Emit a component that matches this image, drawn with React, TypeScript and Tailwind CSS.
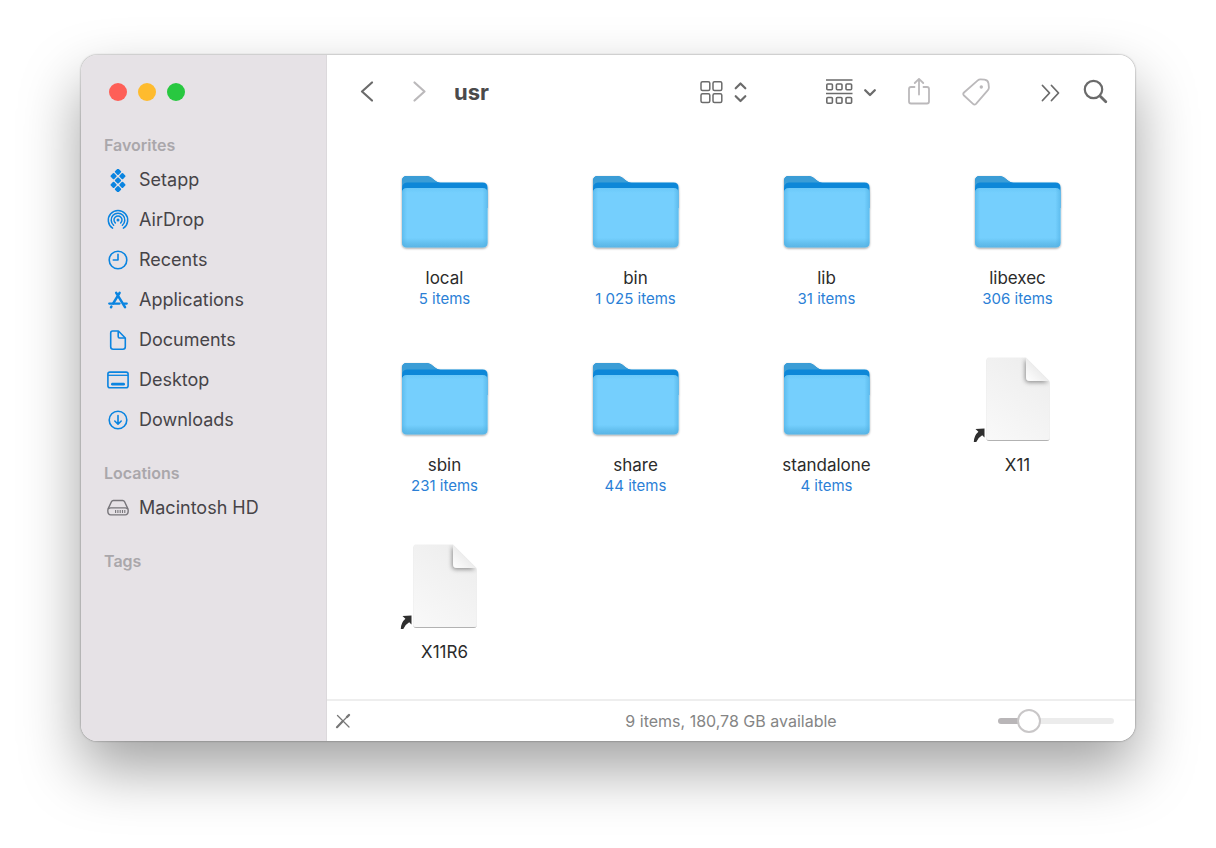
import { useState } from 'react'

const favorites = [
  { name: 'Setapp', icon: <SetappIcon /> },
  { name: 'AirDrop', icon: <AirDropIcon /> },
  { name: 'Recents', icon: <RecentsIcon /> },
  { name: 'Applications', icon: <ApplicationsIcon /> },
  { name: 'Documents', icon: <DocumentsIcon /> },
  { name: 'Desktop', icon: <DesktopIcon /> },
  { name: 'Downloads', icon: <DownloadsIcon /> },
]

const locations = [{ name: 'Macintosh HD', icon: <DiskIcon /> }]

const items = [
  { name: 'local', type: 'folder', info: '5 items' },
  { name: 'bin', type: 'folder', info: '1 025 items' },
  { name: 'lib', type: 'folder', info: '31 items' },
  { name: 'libexec', type: 'folder', info: '306 items' },
  { name: 'sbin', type: 'folder', info: '231 items' },
  { name: 'share', type: 'folder', info: '44 items' },
  { name: 'standalone', type: 'folder', info: '4 items' },
  { name: 'X11', type: 'alias', info: '' },
  { name: 'X11R6', type: 'alias', info: '' },
]

function SetappIcon() {
  const dots = [[11, 2.8], [6.6, 7.1], [15.4, 7.1], [11, 11.5], [6.6, 15.9], [15.4, 15.9], [11, 20.2]]
  return (
    <svg viewBox="0 0 22 23" className="w-[22px] h-[23px]" fill="#0a84e0">
      {dots.map(([x, y]) => (
        <rect key={`${x}-${y}`} x={x - 2.5} y={y - 2.5} width="5" height="5" rx="1" transform={`rotate(45 ${x} ${y})`} />
      ))}
    </svg>
  )
}

function AirDropIcon() {
  return (
    <svg viewBox="0 0 22 22" className="w-[22px] h-[22px]" fill="none" stroke="#0a84e0" strokeWidth="1.5" strokeLinecap="round">
      <path d="M5.6 19.2A9.7 9.7 0 1 1 16.4 19.2" />
      <path d="M6.6 16.2A6.8 6.8 0 1 1 15.4 16.2" />
      <path d="M8.3 13.9A4 4 0 1 1 13.7 13.9" />
      <circle cx="11" cy="11" r="1.5" fill="#0a84e0" stroke="none" />
    </svg>
  )
}

function RecentsIcon() {
  return (
    <svg viewBox="0 0 22 22" className="w-[22px] h-[22px]" fill="none" stroke="#0a84e0" strokeWidth="1.6" strokeLinecap="round" strokeLinejoin="round">
      <circle cx="11" cy="11" r="8.8" />
      <path d="M11 5.3V11H6.3" />
    </svg>
  )
}

function ApplicationsIcon() {
  return (
    <svg viewBox="0 0 22 22" className="w-[22px] h-[22px]" fill="none" stroke="#0a84e0" strokeWidth="2.5" strokeLinecap="round">
      <path d="M12.6 3.8L6.2 14.4M9.2 3.8L18 18.2M4.4 17.6L4 18.2" />
      <path d="M2.2 14.6H12.6M17 14.6H19.8" strokeWidth="2.2" />
    </svg>
  )
}

function DocumentsIcon() {
  return (
    <svg viewBox="0 0 22 22" className="w-[22px] h-[22px]" fill="none" stroke="#0a84e0" strokeWidth="1.6" strokeLinejoin="round">
      <path d="M5.7 2H11.4L18.3 9V17.8Q18.3 20.2 15.9 20.2H6.1Q3.7 20.2 3.7 17.8V4Q3.7 2 5.7 2Z" />
      <path d="M11.2 2.2V7.6Q11.2 9 12.6 9H18" />
    </svg>
  )
}

function DesktopIcon() {
  return (
    <svg viewBox="0 0 22 22" className="w-[22px] h-[22px]" fill="none" stroke="#0a84e0" strokeWidth="1.6">
      <rect x="0.9" y="3.1" width="20.2" height="15.6" rx="2" />
      <path d="M1 6.3H21" strokeWidth="1.3" />
      <path d="M5.4 15.2H16.6" strokeWidth="2.8" strokeLinecap="round" />
    </svg>
  )
}

function DownloadsIcon() {
  return (
    <svg viewBox="0 0 22 22" className="w-[22px] h-[22px]" fill="none" stroke="#0a84e0" strokeWidth="1.6" strokeLinecap="round" strokeLinejoin="round">
      <circle cx="11" cy="11" r="8.8" />
      <path d="M11 6.5V15M7.8 12L11 15.2L14.2 12" />
    </svg>
  )
}

function DiskIcon() {
  return (
    <svg viewBox="0 0 22 22" className="w-[22px] h-[22px]" fill="none" stroke="#77757a" strokeWidth="1.4" strokeLinejoin="round">
      <path d="M6.4 3.5H15.6Q17 3.5 17.6 4.8L20.8 11.6Q21.2 12.6 21.2 13.8Q21.2 17.9 18.2 17.9H3.8Q0.8 17.9 0.8 13.8Q0.8 12.6 1.2 11.6L4.4 4.8Q5 3.5 6.4 3.5Z" />
      <path d="M1.3 12Q2.2 10.9 3.8 10.9H18.2Q19.8 10.9 20.7 12" />
      <path d="M8.6 13V16M10.9 13V16M13.2 13V16M15.5 13V16M17.8 13V16" strokeWidth="1.1" />
    </svg>
  )
}

// Gradients and shadows shared by every folder and alias in the grid
function IconDefs() {
  return (
    <svg width="0" height="0" className="absolute" aria-hidden="true">
      <defs>
        <linearGradient id="folder-front" x1="0" y1="0" x2="0" y2="1">
          <stop offset="0" stopColor="#6cc8f8" />
          <stop offset="0.08" stopColor="#74cffd" />
          <stop offset="0.84" stopColor="#74cffd" />
          <stop offset="0.93" stopColor="#63bfee" />
          <stop offset="1" stopColor="#58b4e5" />
        </linearGradient>
        <linearGradient id="folder-sides" x1="0" y1="0" x2="1" y2="0">
          <stop offset="0" stopColor="#4fb0e4" stopOpacity="0.6" />
          <stop offset="0.06" stopColor="#4fb0e4" stopOpacity="0" />
          <stop offset="0.94" stopColor="#4fb0e4" stopOpacity="0" />
          <stop offset="1" stopColor="#4fb0e4" stopOpacity="0.6" />
        </linearGradient>
        <linearGradient id="paper" x1="0" y1="1" x2="0.6" y2="0">
          <stop offset="0" stopColor="#f9f9f9" />
          <stop offset="1" stopColor="#eeeeee" />
        </linearGradient>
        <linearGradient id="paper-fold" x1="0" y1="1" x2="0.6" y2="0.4">
          <stop offset="0" stopColor="#ffffff" />
          <stop offset="1" stopColor="#e9e9e9" />
        </linearGradient>
        <clipPath id="paper-clip">
          <path d="M12.5 2.5H52L75.5 26V85.5H12.5Z" />
        </clipPath>
        <filter id="drop" x="-20%" y="-20%" width="140%" height="140%">
          <feDropShadow dx="0" dy="1" stdDeviation="0.9" floodColor="#000" floodOpacity="0.4" />
        </filter>
        <filter id="paper-drop" x="-20%" y="-20%" width="140%" height="140%">
          <feDropShadow dx="0" dy="1" stdDeviation="0.7" floodColor="#000" floodOpacity="0.3" />
        </filter>
        <filter id="fold-drop" x="-40%" y="-40%" width="180%" height="180%">
          <feDropShadow dx="-1" dy="1.5" stdDeviation="2.2" floodColor="#000" floodOpacity="0.4" />
        </filter>
      </defs>
    </svg>
  )
}

function FolderIcon() {
  return (
    <svg viewBox="0 0 88 88" className="w-[88px] h-[88px] overflow-visible">
      <g filter="url(#drop)">
        <path d="M1 13Q1 8 6 8H25Q28.3 8 30.5 9.8L33.5 12.3Q36.1 14.5 39.5 14.5H81.5Q86.5 14.5 86.5 19.5V40H1Z" fill="#0d87d8" />
        <path d="M1 21V13Q1 8 6 8H25Q28.3 8 30.5 9.8L33.5 12.3Q35 13.8 37 14.5H6Q1 14.5 1 21Z" fill="#3a9dd6" />
        <path d="M1 25Q1 20 6 20H81.5Q86.5 20 86.5 25V74.5Q86.5 79.5 81.5 79.5H6Q1 79.5 1 74.5Z" fill="url(#folder-front)" />
      </g>
      <path d="M1 25Q1 20 6 20H81.5Q86.5 20 86.5 25V74.5Q86.5 79.5 81.5 79.5H6Q1 79.5 1 74.5Z" fill="url(#folder-sides)" />
    </svg>
  )
}

function AliasIcon() {
  return (
    <svg viewBox="0 0 88 88" className="w-[88px] h-[88px] overflow-visible">
      <path d="M14.5 2.5H52L75.5 26V83Q75.5 85 73 85H15Q12.500 85 12.500 83V4.500Q12.500 2.500 14.500 2.500Z" fill="url(#paper)" filter="url(#paper-drop)" />
      <g clipPath="url(#paper-clip)">
        <path d="M52 2.500V22Q52 26 56 26H75.500Z" fill="url(#paper-fold)" filter="url(#fold-drop)" />
      </g>
      <path d="M1.500 74L10.500 73.500V82.500L8.200 80.200Q4 82.500 2.300 87L-0.200 87Q0 80.500 4.400 76.800Z" fill="#2f2f2f" />
    </svg>
  )
}

function SidebarSection({ title, links }: { title: string; links: any[] }) {
  return (
    <section>
      <h2 className="px-[23px] text-base leading-6 font-semibold text-[#aaa7ab]">{title}</h2>
      {links.length > 0 && (
        <ul className="mt-[3px]">
          {links.map((link) => (
            <li key={link.name}>
              <a href="#" className="flex items-center gap-2.5 h-10 pl-[26px] text-lg text-[#464448]">
                {link.icon}
                {link.name}
              </a>
            </li>
          ))}
        </ul>
      )}
    </section>
  )
}

function Toolbar() {
  return (
    <header className="flex items-center h-[73px] pl-8 pr-[27px] text-[#6b6b6b]">
      <button aria-label="Back">
        <svg viewBox="0 0 16 24" className="w-4 h-6" fill="none" stroke="currentColor" strokeWidth="2.2" strokeLinecap="round" strokeLinejoin="round">
          <path d="M13 2.5L3 11.5L13 20.5" />
        </svg>
      </button>
      <button aria-label="Forward" className="ml-9 text-[#bbb9bb]">
        <svg viewBox="0 0 16 24" className="w-4 h-6" fill="none" stroke="currentColor" strokeWidth="2.2" strokeLinecap="round" strokeLinejoin="round">
          <path d="M3.5 2.5L13.5 11.5L3.5 20.5" />
        </svg>
      </button>
      <h1 className="flex-1 ml-[27px] text-[22px] leading-7 font-bold text-[#4b4a4b]">usr</h1>
      <button aria-label="View as icons" className="flex items-center gap-2.5">
        <svg viewBox="0 0 24 24" className="w-6 h-6" fill="none" stroke="currentColor" strokeWidth="1.5">
          <rect x="1" y="1.7" width="8.8" height="8.8" rx="1.5" />
          <rect x="13" y="1.7" width="8.8" height="8.8" rx="1.5" />
          <rect x="1" y="13.7" width="8.8" height="8.8" rx="1.5" />
          <rect x="13" y="13.7" width="8.8" height="8.8" rx="1.5" />
        </svg>
        <svg viewBox="0 0 14 24" className="w-3.5 h-6" fill="none" stroke="currentColor" strokeWidth="2.2" strokeLinecap="round" strokeLinejoin="round">
          <path d="M1.700 8.300L6.500 3.500L11.300 8.300M1.700 16.200L6.500 21L11.300 16.200" />
        </svg>
      </button>
      <button aria-label="Group items" className="flex items-center gap-2.5 ml-[77px]">
        <svg viewBox="0 0 28 28" className="w-7 h-7" fill="none" stroke="currentColor" strokeWidth="1.6">
          <path d="M1 2H27.500M1 15.500H27.500" />
          <rect x="1.800" y="6" width="5.600" height="5.800" rx="1" />
          <rect x="11.400" y="6" width="5.600" height="5.800" rx="1" />
          <rect x="21" y="6" width="5.600" height="5.800" rx="1" />
          <rect x="1.800" y="19.500" width="5.600" height="5.800" rx="1" />
          <rect x="11.400" y="19.500" width="5.600" height="5.800" rx="1" />
          <rect x="21" y="19.500" width="5.600" height="5.800" rx="1" />
        </svg>
        <svg viewBox="0 0 14 14" className="w-3.5 h-3.5" fill="none" stroke="currentColor" strokeWidth="2.3" strokeLinecap="round" strokeLinejoin="round">
          <path d="M2.200 5.200L7 10L11.800 5.200" />
        </svg>
      </button>
      <button aria-label="Share" className="ml-[30px] text-[#bbb9bb]">
        <svg viewBox="0 0 24 28" className="w-6 h-7" fill="none" stroke="currentColor" strokeWidth="1.8" strokeLinecap="round" strokeLinejoin="round">
          <path d="M7.500 9H4Q2 9 2 11V23.500Q2 25.500 4 25.500H20Q22 25.500 22 23.500V11Q22 9 20 9H16.500" />
          <path d="M12 16.500V1M7.800 5L12 0.900L16.200 5" />
        </svg>
      </button>
      <button aria-label="Edit tags" className="ml-[31px] text-[#bbb9bb]">
        <svg viewBox="0 0 28 28" className="w-7 h-7" fill="none" stroke="currentColor" strokeWidth="1.8" strokeLinejoin="round">
          <path d="M15.800 2.300Q17 1.200 18.600 1.300L22.500 1.600Q26 2 26.500 5.300L26.900 9.300Q27 11 25.900 12.200L14 25.800Q12.500 27.300 11 25.900L2 17.500Q0.500 16 2 14.500Z" />
          <circle cx="19.300" cy="9" r="1.700" fill="currentColor" stroke="none" />
        </svg>
      </button>
      <button aria-label="More toolbar items" className="ml-[50px]">
        <svg viewBox="0 0 20 20" className="w-5 h-5" fill="none" stroke="currentColor" strokeWidth="1.8" strokeLinecap="round" strokeLinejoin="round">
          <path d="M2.500 3.500L9.500 11L2.500 18.500M11.500 3.500L18.500 11L11.500 18.500" />
        </svg>
      </button>
      <button aria-label="Search" className="ml-[22px]">
        <svg viewBox="0 0 26 26" className="w-[26px] h-[26px]" fill="none" stroke="currentColor" strokeLinecap="round">
          <circle cx="11.500" cy="10.500" r="8.700" strokeWidth="2.200" />
          <path d="M18 17L23.800 22.800" strokeWidth="2.800" />
        </svg>
      </button>
    </header>
  )
}

export default function App() {
  const [size, setSize] = useState(21)

  return (
    <div className="min-h-screen flex bg-white px-[81px] pt-[55px] pb-[107px] font-[Inter,sans-serif]">
      <IconDefs />
      <div className="flex-1 flex rounded-2xl overflow-hidden shadow-[0_0_2px_rgba(0,0,0,0.5),0_28px_60px_rgba(0,0,0,0.37)]">
        <aside className="w-[246px] shrink-0 bg-[#e6e2e6] border-r border-[#dcd9dc]">
          <div className="flex gap-[11px] pt-7 pl-7 pb-8">
            <button aria-label="Close" className="w-[18px] h-[18px] rounded-full bg-[#fe5f57]" />
            <button aria-label="Minimize" className="w-[18px] h-[18px] rounded-full bg-[#febb2e]" />
            <button aria-label="Zoom" className="w-[18px] h-[18px] rounded-full bg-[#28c840]" />
          </div>
          <nav className="flex flex-col gap-[21px]">
            <SidebarSection title="Favorites" links={favorites} />
            <SidebarSection title="Locations" links={locations} />
            <SidebarSection title="Tags" links={[]} />
          </nav>
        </aside>

        <main className="flex-1 flex flex-col bg-white">
          <Toolbar />

          <div className="flex-1 grid grid-cols-4 content-start gap-y-[46px] px-[22px] pt-10">
            {items.map((item) => (
              <button key={item.name} className="flex flex-col items-center">
                {item.type === 'folder' ? <FolderIcon /> : <AliasIcon />}
                <span className="mt-[11px] text-[17px] leading-[22px] text-[#2b2b2b]">{item.name}</span>
                {item.info && <span className="text-[15px] leading-5 text-[#2b7fd6]">{item.info}</span>}
              </button>
            ))}
          </div>

          {/* Status bar */}
          <footer className="grid grid-cols-[1fr_auto_1fr] items-center h-[42px] px-2 border-t-2 border-[#eeeeee]">
            <svg viewBox="0 0 16 16" className="w-4 h-4" fill="none" stroke="#777" strokeLinecap="round">
              <path d="M2.500 2.500L14 14" strokeWidth="1.300" />
              <path d="M2 14.200L7 9" strokeWidth="2.200" />
              <path d="M7 9L12 4" strokeWidth="1.300" />
              <path d="M12 4L14 2" strokeWidth="2.400" />
            </svg>
            <p className="text-base text-[#858585]">9 items, 180,78 GB available</p>
            <input
              type="range"
              aria-label="Icon size"
              value={size}
              onChange={(e) => setSize(Number(e.target.value))}
              className="justify-self-end mr-[13px] w-[116px] h-1.5 appearance-none rounded-full bg-[linear-gradient(to_right,#b9b6b8_27%,#ececec_27%)] [&::-webkit-slider-thumb]:appearance-none [&::-webkit-slider-thumb]:w-6 [&::-webkit-slider-thumb]:h-6 [&::-webkit-slider-thumb]:rounded-full [&::-webkit-slider-thumb]:bg-white [&::-webkit-slider-thumb]:border-2 [&::-webkit-slider-thumb]:border-[#c9c7c8]"
            />
          </footer>
        </main>
      </div>
    </div>
  )
}
